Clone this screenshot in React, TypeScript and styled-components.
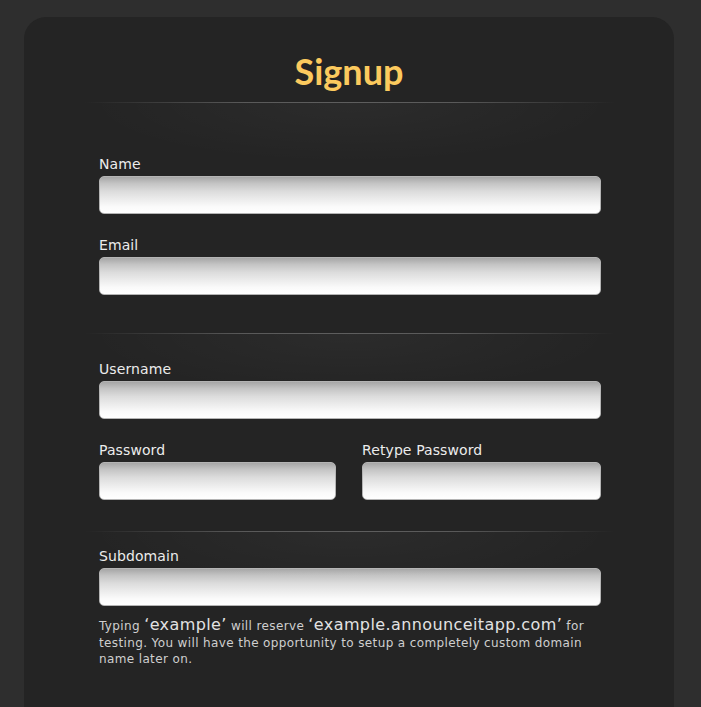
import React from "react";
import styled, { createGlobalStyle } from "styled-components";

const GlobalStyle = createGlobalStyle`
  html, body {
    margin: 0;
    padding: 0;
    background: #2e2e2e;
  }
  body {
    font-family: "DejaVu Sans", "Liberation Sans", sans-serif;
  }
`;

const Page = styled.div`
  padding: 17px 0 0 24px;
  min-height: 707px;
  box-sizing: border-box;
  overflow: hidden;
`;

const Card = styled.div`
  width: 650px;
  min-height: 760px;
  background: #242424;
  border-radius: 22px 22px 0 0;
  padding: 32px 0 60px;
  box-sizing: border-box;
`;

const Title = styled.h1`
  margin: 0;
  font-family: Lato, "Open Sans", sans-serif;
  font-weight: 700;
  font-size: 36px;
  line-height: 44px;
  color: #fcca5e;
  text-align: center;
`;

const Form = styled.form`
  width: 502px;
  margin-left: 75px;
  display: flex;
  flex-direction: column;
`;

const Separator = styled.div<{ $top: number; $after: number }>`
  position: relative;
  margin: ${(p) => p.$top}px -14px 0;
  height: 1px;
  background: linear-gradient(
    to right,
    rgba(90, 90, 90, 0) 0%,
    rgba(95, 95, 95, 0.9) 30%,
    #5e5e5e 50%,
    rgba(95, 95, 95, 0.9) 70%,
    rgba(90, 90, 90, 0) 100%
  );
  margin-bottom: ${(p) => p.$after}px;
  &::after {
    content: "";
    position: absolute;
    left: 0;
    right: 0;
    top: 1px;
    height: 60px;
    background: radial-gradient(
      ellipse 50% 100% at 50% 0%,
      rgba(255, 255, 255, 0.035) 0%,
      rgba(255, 255, 255, 0) 100%
    );
    pointer-events: none;
  }
`;

const Field = styled.div<{ $top?: number }>`
  display: flex;
  flex-direction: column;
  margin-top: ${(p) => p.$top ?? 0}px;
  min-width: 0;
`;

const Label = styled.label`
  font-size: 14px;
  line-height: 17px;
  color: #ececec;
  margin-bottom: 3px;
  letter-spacing: 0.1px;
`;

const Input = styled.input`
  box-sizing: border-box;
  width: 100%;
  height: 38px;
  border: 1px solid #b4b4b4;
  border-radius: 5px;
  background: linear-gradient(
    to bottom,
    #a6a6a6 0%,
    #c4c4c4 18%,
    #dcdcdc 40%,
    #ececec 62%,
    #fafafa 82%,
    #ffffff 100%
  );
  outline: none;
  padding: 0 8px;
  font-size: 14px;
  font-family: inherit;
`;

const Row = styled.div<{ $top: number }>`
  display: grid;
  grid-template-columns: 237px 239px;
  column-gap: 26px;
  margin-top: ${(p) => p.$top}px;
`;

const Help = styled.p`
  margin: 12px 0 0;
  font-size: 12px;
  line-height: 16.5px;
  color: #cfcfcf;
  letter-spacing: 0.37px;
`;

const Big = styled.span`
  font-size: 16px;
  line-height: 13px;
  color: #e2e2e2;
  letter-spacing: 0.4px;
`;

export default function App() {
  return (
    <>
      <GlobalStyle />
      <Page>
        <Card>
          <Title>Signup</Title>
          <Form onSubmit={(e) => e.preventDefault()}>
            <Separator $top={9} $after={53} />
            <Field>
              <Label>Name</Label>
              <Input type="text" />
            </Field>
            <Field $top={23}>
              <Label>Email</Label>
              <Input type="email" />
            </Field>
            <Separator $top={38} $after={27} />
            <Field>
              <Label>Username</Label>
              <Input type="text" />
            </Field>
            <Row $top={23}>
              <Field>
                <Label>Password</Label>
                <Input type="password" />
              </Field>
              <Field>
                <Label>Retype Password</Label>
                <Input type="password" />
              </Field>
            </Row>
            <Separator $top={31} $after={16} />
            <Field>
              <Label>Subdomain</Label>
              <Input type="text" />
            </Field>
            <Help>
              Typing <Big>‘example’</Big> will reserve{" "}
              <Big>‘example.announceitapp.com’</Big> for testing. You will have
              the opportunity to setup a completely custom domain name later on.
            </Help>
          </Form>
        </Card>
      </Page>
    </>
  );
}
